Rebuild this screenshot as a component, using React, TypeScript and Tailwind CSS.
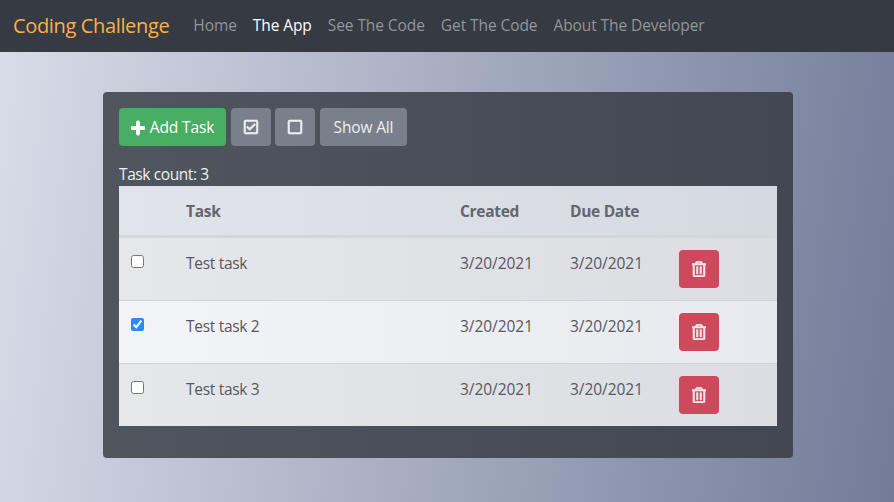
import { FaPlus, FaRegCheckSquare, FaRegSquare, FaRegTrashAlt } from "react-icons/fa";

const navLinks = [
  { label: "Home" },
  { label: "The App", active: true },
  { label: "See The Code" },
  { label: "Get The Code" },
  { label: "About The Developer" },
];

const tasks = [
  { name: "Test task", done: false, stripe: "from-[#e6e7eb] to-[#dcdde2]" },
  { name: "Test task 2", done: true, stripe: "from-[#f3f4f8] to-[#e8e9ee]" },
  { name: "Test task 3", done: false, stripe: "from-[#e6e7eb] to-[#dcdde2]" },
];

export default function App() {
  return (
    <div className="min-h-screen bg-[linear-gradient(97deg,#d8dde9,#727b98)] font-['Open_Sans','Noto_Sans',sans-serif] text-base">
      {/* Navbar */}
      <nav className="h-[52px] bg-[#363a42] flex items-center px-[13px]">
        <span className="text-[20px] text-[#fdb045] mr-6 tracking-[-0.35px]">Coding Challenge</span>
        <ul className="flex gap-4">
          {navLinks.map((link) => (
            <li key={link.label} className={`text-[15.5px] tracking-[-0.08px] ${link.active ? "text-white" : "text-[#92959a]"}`}>
              {link.label}
            </li>
          ))}
        </ul>
      </nav>

      <div className="pt-10 pl-[103px]">
        <div className="w-[690px] h-[366px] p-4 rounded bg-gradient-to-r from-[#50565e] to-[#424751]">
          {/* Toolbar */}
          <div className="flex h-[38px]">
            <button className="w-[107px] pt-px rounded bg-[#47ae63] text-white text-[15.5px] tracking-[-0.15px] flex items-center justify-center gap-[5px]">
              <FaPlus className="w-[14px] h-4 stroke-[30]" />
              Add Task
            </button>
            <button className="ml-[5px] w-10 rounded bg-[#7a808b] text-[#eceef0] flex items-center justify-center">
              <FaRegCheckSquare className="w-4 h-4 stroke-[20]" />
            </button>
            <button className="ml-1 w-10 rounded bg-[#7a808b] text-[#eceef0] flex items-center justify-center">
              <FaRegSquare className="w-4 h-4 stroke-[20]" />
            </button>
            <button className="ml-[5px] w-[87px] pt-px rounded bg-[#7a808b] text-[#eceef0] text-[15.5px] tracking-[-0.15px]">
              Show All
            </button>
          </div>

          <div className="mt-4 h-6 leading-6 text-[15.5px] tracking-[-0.4px] text-[#eef0f2]">Task count: 3</div>

          <table className="w-[658px] table-fixed border-collapse text-[15.5px] tracking-[-0.3px] text-[#55595f]">
            <colgroup>
              <col className="w-[55px]" />
              <col className="w-[274px]" />
              <col className="w-[110px]" />
              <col className="w-[109px]" />
              <col className="w-[110px]" />
            </colgroup>
            <thead>
              <tr className="h-[50px] bg-gradient-to-r from-[#e1e4ea] to-[#d5d9e1] border-b-[3px] border-[#d3d6dd] text-[#62666e]">
                <th />
                <th className="px-3 pt-0.5 text-left font-bold">Task</th>
                <th className="px-3 pt-0.5 text-left font-bold">Created</th>
                <th className="px-3 pt-0.5 text-left font-bold">Due Date</th>
                <th />
              </tr>
            </thead>
            <tbody>
              {tasks.map((task, i) => (
                <tr key={task.name} className={`bg-gradient-to-r ${task.stripe} ${i < 2 ? "border-b border-[#d2d4d9]" : ""}`}>
                  <td className="px-3 pt-[17px] pb-0 align-top leading-none">
                    <input type="checkbox" defaultChecked={task.done} className="w-[13px] h-[13px] block accent-[#2b88ff]" />
                  </td>
                  <td className="px-3 pt-[13px] align-top leading-6">{task.name}</td>
                  <td className="px-3 pt-[13px] align-top leading-6 tracking-[-0.05px]">3/20/2021</td>
                  <td className="px-3 pt-[13px] align-top leading-6 tracking-[-0.05px]">3/20/2021</td>
                  <td className="p-3 align-top">
                    <button className="w-10 h-[38px] rounded bg-[#cf495c] text-[#f0e6ea] flex items-center justify-center">
                      <FaRegTrashAlt className="w-[14px] h-4 stroke-[20]" />
                    </button>
                  </td>
                </tr>
              ))}
            </tbody>
          </table>
        </div>
      </div>
    </div>
  );
}
